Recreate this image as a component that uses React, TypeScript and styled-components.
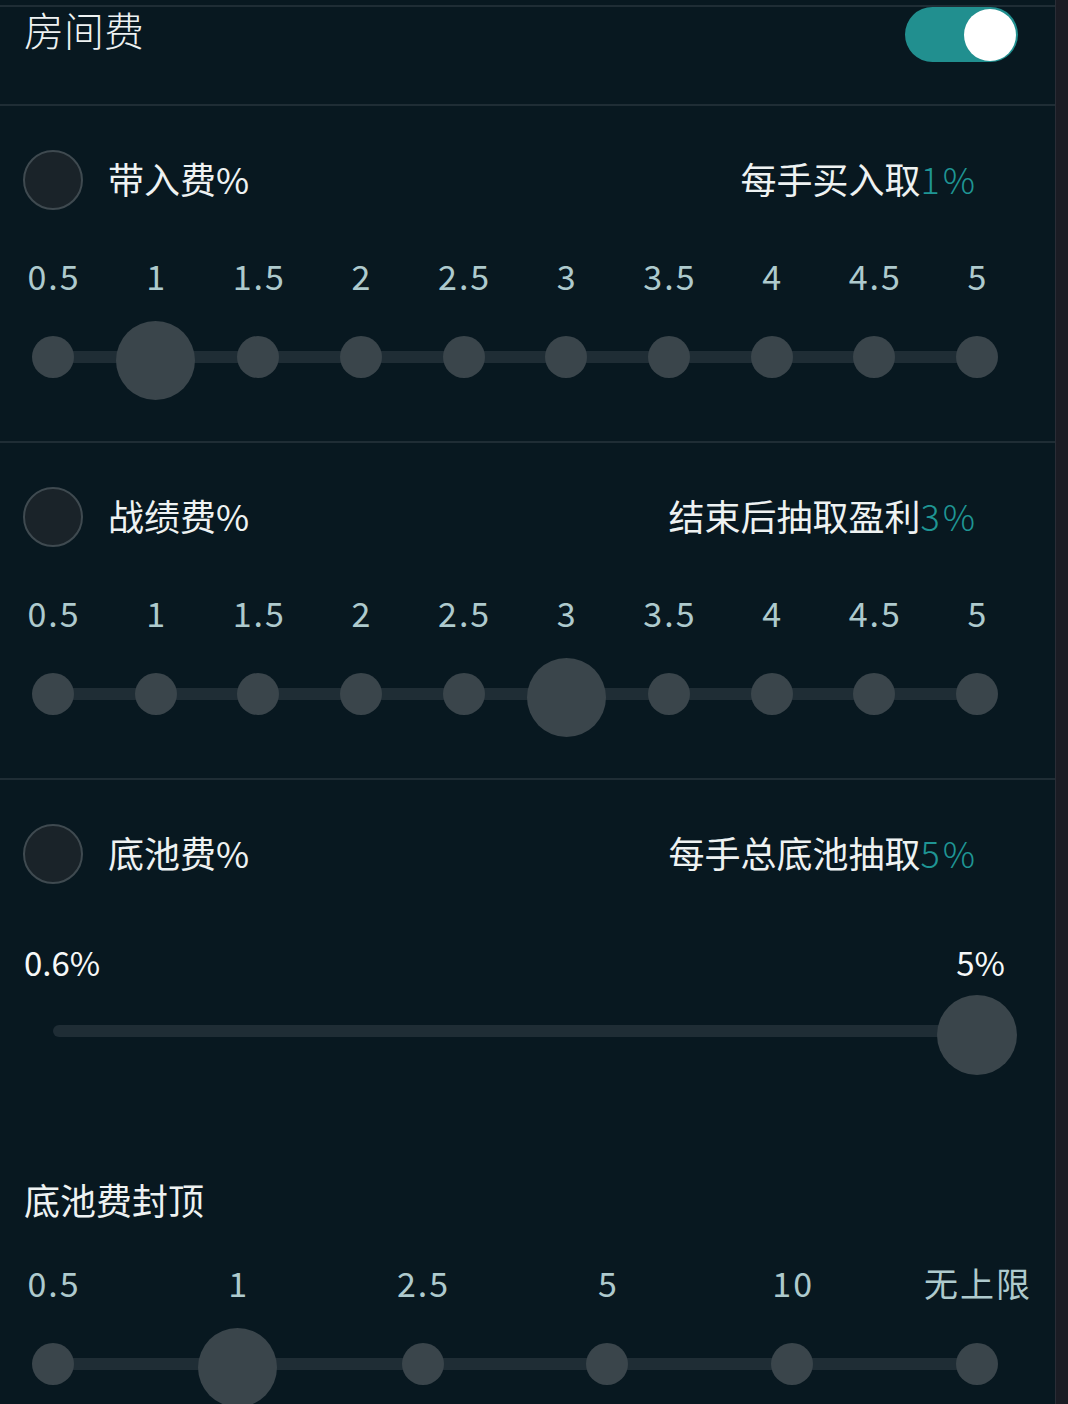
import React from "react";
import styled, { createGlobalStyle } from "styled-components";

const GlobalStyle = createGlobalStyle`
  html, body {
    margin: 0;
    padding: 0;
    background: #081820;
  }
  body {
    font-family: "Noto Sans CJK SC", "Noto Sans", sans-serif;
    color: #f1f4f4;
  }
`;

const Page = styled.div`
  display: grid;
  grid-template-columns: 1055px 1fr;
  width: 1068px;
  height: 1404px;
  overflow: hidden;
  background: #081820;
`;

const Main = styled.div`
  display: flex;
  flex-direction: column;
  padding-top: 5px;
`;

const Gutter = styled.div`
  background: #1b1c24;
  border-left: 1px solid #2a2d36;
`;

const Divider = styled.div`
  height: 2px;
  background: #1f2d35;
`;

const Header = styled.div`
  height: 97px;
  display: flex;
  justify-content: space-between;
  align-items: flex-start;
  padding: 0 37px 0 24px;
`;

const Title = styled.div<{ $size?: number }>`
  font-size: ${(p) => p.$size ?? 36}px;
  line-height: 44px;
  font-weight: 300;
  color: #eef2f2;
`;

const Toggle = styled.div<{ $on: boolean }>`
  width: 113px;
  height: 55px;
  border-radius: 28px;
  background: ${(p) => (p.$on ? "#218f8f" : "#3a454b")};
  display: flex;
  align-items: center;
  justify-content: ${(p) => (p.$on ? "flex-end" : "flex-start")};
  padding: 0 2px;
  box-sizing: border-box;
`;

const Knob = styled.div`
  width: 52px;
  height: 52px;
  border-radius: 50%;
  background: #ffffff;
`;

const Section = styled.div`
  display: flex;
  flex-direction: column;
  padding: 44px 0 44px;
`;

const OptionRow = styled.div`
  height: 60px;
  display: flex;
  align-items: center;
  padding: 0 77px 0 23px;
`;

const Radio = styled.div`
  width: 60px;
  height: 60px;
  border-radius: 50%;
  box-sizing: border-box;
  border: 2px solid #3f4a50;
  background: #1a2329;
  flex-shrink: 0;
`;

const OptionLabel = styled.div`
  font-size: 36px;
  line-height: 48px;
  padding-bottom: 4px;
  margin-left: 25px;
  flex: 1;
  color: #eef2f2;
`;

const Summary = styled.div`
  font-size: 36px;
  line-height: 48px;
  padding-bottom: 4px;
  color: #eef2f2;
  white-space: nowrap;
`;

const Accent = styled.span`
  color: #1f9594;
  letter-spacing: 3px;
  font-weight: 300;
`;

const Scale = styled.div<{ $top: number }>`
  display: flex;
  justify-content: space-between;
  margin: ${(p) => p.$top}px 78px 0 53px;
  height: 40px;
  align-items: center;
`;

const Tick = styled.div`
  width: 0;
  display: flex;
  justify-content: center;
  white-space: nowrap;
  font-size: 34px;
  line-height: 40px;
  padding-bottom: 4px;
  letter-spacing: 2px;
  text-indent: 2px;
  color: #aecacd;
`;

const DotRow = styled.div`
  position: relative;
  margin: 19px 78px 0 53px;
  height: 80px;
  display: flex;
  justify-content: space-between;
  align-items: center;
`;

const Track = styled.div<{ $top?: number }>`
  position: absolute;
  left: 0;
  right: 0;
  top: ${(p) => p.$top ?? 34}px;
  height: 12px;
  border-radius: 6px;
  background: #1f2d35;
`;

const DotSlot = styled.div`
  width: 0;
  display: flex;
  justify-content: center;
  position: relative;
`;

const Dot = styled.div<{ $active?: boolean }>`
  flex-shrink: 0;
  width: ${(p) => (p.$active ? 79 : 42)}px;
  height: ${(p) => (p.$active ? 79 : 42)}px;
  border-radius: 50%;
  background: #3a454b;
  transform: translateY(${(p) => (p.$active ? 3 : 0)}px);
`;

const RangeLabels = styled.div`
  display: flex;
  justify-content: space-between;
  margin: 58px 50px 0 24px;
  font-size: 33px;
  line-height: 40px;
  padding-bottom: 4px;
  color: #f6f8f8;
`;

const RangeRow = styled.div`
  position: relative;
  margin: 9px 78px 0 53px;
  height: 80px;
  display: flex;
  justify-content: flex-end;
  align-items: center;
`;

const Thumb = styled.div`
  width: 80px;
  height: 80px;
  border-radius: 50%;
  background: #3a454b;
  margin-right: -40px;
  position: relative;
`;

const CapTitle = styled.div`
  font-size: 36px;
  line-height: 48px;
  padding: 0 0 4px 24px;
  margin-top: 100px;
  color: #eef2f2;
`;

const halfSteps = ["0.5", "1", "1.5", "2", "2.5", "3", "3.5", "4", "4.5", "5"];
const capSteps = ["0.5", "1", "2.5", "5", "10", "无上限"];

function StepSlider({
  steps,
  active,
  top,
}: {
  steps: string[];
  active: number;
  top: number;
}) {
  return (
    <>
      <Scale $top={top}>
        {steps.map((s) => (
          <Tick key={s}>{s}</Tick>
        ))}
      </Scale>
      <DotRow>
        <Track />
        {steps.map((s, i) => (
          <DotSlot key={s}>
            <Dot $active={i === active} />
          </DotSlot>
        ))}
      </DotRow>
    </>
  );
}

function FeeOption({
  label,
  summary,
  value,
}: {
  label: string;
  summary: string;
  value: string;
}) {
  return (
    <OptionRow>
      <Radio />
      <OptionLabel>{label}</OptionLabel>
      <Summary>
        {summary}
        <Accent>{value}</Accent>
      </Summary>
    </OptionRow>
  );
}

export default function App() {
  return (
    <>
      <GlobalStyle />
      <Page>
        <Main>
          <Divider />
          <Header>
            <Title $size={40}>房间费</Title>
            <Toggle $on>
              <Knob />
            </Toggle>
          </Header>

          <Divider />
          <Section>
            <FeeOption label="带入费%" summary="每手买入取" value="1%" />
            <StepSlider steps={halfSteps} active={1} top={48} />
          </Section>

          <Divider />
          <Section>
            <FeeOption label="战绩费%" summary="结束后抽取盈利" value="3%" />
            <StepSlider steps={halfSteps} active={5} top={48} />
          </Section>

          <Divider />
          <Section>
            <FeeOption label="底池费%" summary="每手总底池抽取" value="5%" />
            <RangeLabels>
              <span>0.6%</span>
              <span>5%</span>
            </RangeLabels>
            <RangeRow>
              <Track $top={30} />
              <Thumb />
            </RangeRow>
            <CapTitle>底池费封顶</CapTitle>
            <StepSlider steps={capSteps} active={1} top={38} />
          </Section>
        </Main>
        <Gutter />
      </Page>
    </>
  );
}
